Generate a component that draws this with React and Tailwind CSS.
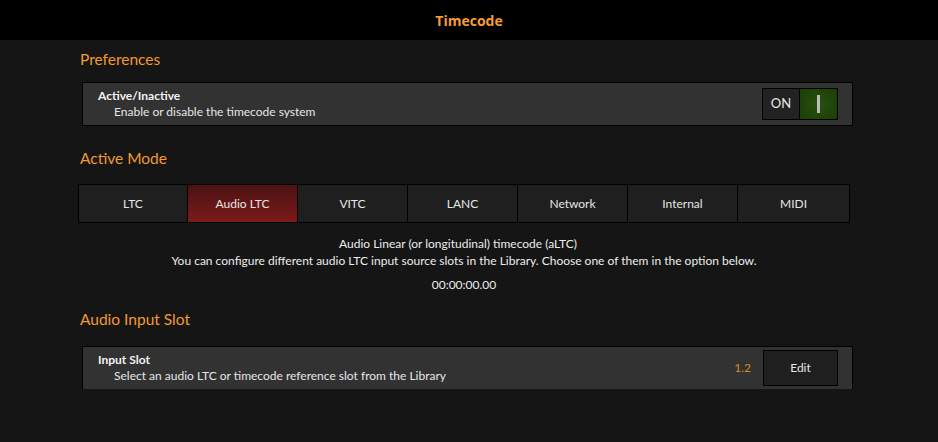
import { useState } from 'react';

const modes = ['LTC', 'Audio LTC', 'VITC', 'LANC', 'Network', 'Internal', 'MIDI'];

function Section({ title, children }) {
  return (
    <div>
      <h2 className="text-[15.5px] leading-[20px] text-[#f29a2e] pl-[2px]">{title}</h2>
      {children}
    </div>
  );
}

function SettingRow({ title, desc, children }) {
  return (
    <div className="ml-[4px] w-[771px] flex items-center justify-between bg-[#323232] border border-black h-[44px] pl-[15px] pr-[15px]">
      <div className="flex flex-col">
        <span className="text-[12px] leading-[16px] font-bold text-[#f2f2f2]">{title}</span>
        <span className="text-[12px] leading-[16px] text-[#e6e6e6] pl-[16px]">{desc}</span>
      </div>
      {children}
    </div>
  );
}

export default function App() {
  const [active, setActive] = useState(true);
  const [mode, setMode] = useState('Audio LTC');

  return (
    <div className="w-[938px] h-[442px] bg-[#151515] overflow-hidden" style={{ fontFamily: 'Lato, "Open Sans", sans-serif' }}>
      <div className="h-[40px] bg-black flex items-center justify-center">
        <span className="text-[14px] font-bold text-[#f59e33]" style={{ fontFamily: '"Open Sans", sans-serif' }}>Timecode</span>
      </div>

      <div className="w-[772px] ml-[78px] pt-[9px]">
        <Section title="Preferences">
          <div className="mt-[13px]">
            <SettingRow title="Active/Inactive" desc="Enable or disable the timecode system">
              <div className="flex border border-black h-[32px] w-[76px] -mr-[1px]">
                <button
                  onClick={() => setActive(false)}
                  className="w-[37px] bg-[#222] text-[13px] text-[#e8e8e8] flex items-center justify-center border-r border-black"
                >
                  ON
                </button>
                <button
                  onClick={() => setActive(!active)}
                  className="flex-1 flex items-center justify-center bg-[radial-gradient(circle,#28500f_0%,#1c3d08_100%)]"
                >
                  <span className="w-[3px] h-[18px] bg-[#b8bdb5]"></span>
                </button>
              </div>
            </SettingRow>
          </div>
        </Section>

        <div className="mt-[22px]">
          <Section title="Active Mode">
            <div className="mt-[16px] grid grid-cols-[108px_110px_110px_110px_110px_110px_1fr] border border-black h-[39px]">
              {modes.map((m, i) => (
                <button
                  key={m}
                  onClick={() => setMode(m)}
                  className={`text-[12px] text-[#e6e6e6] flex items-center justify-center ${i > 0 ? 'border-l border-black' : ''} ${
                    mode === m ? 'bg-gradient-to-b from-[#4c1212] to-[#7c1a1a]' : 'bg-[#1f1f1f]'
                  }`}
                >
                  {m}
                </button>
              ))}
            </div>
          </Section>
        </div>

        <div className="mt-[12px] flex flex-col items-center text-[12px] leading-[17px] text-[#ececec]">
          <span className="-ml-[12px]">Audio Linear (or longitudinal) timecode (aLTC)</span>
          <span>You can configure different audio LTC input source slots in the Library. Choose one of them in the option below.</span>
          <span className="mt-[7px]">00:00:00.00</span>
        </div>

        <div className="mt-[16px]">
          <Section title="Audio Input Slot">
            <div className="mt-[17px]">
              <div className="ml-[4px] w-[771px] flex items-center justify-between bg-[#323232] border border-black border-b-0 h-[43px] pl-[15px] pr-[15px]">
                <div className="flex flex-col">
                  <span className="text-[12px] leading-[16px] font-bold text-[#f2f2f2]">Input Slot</span>
                  <span className="text-[12px] leading-[16px] text-[#e6e6e6] pl-[16px]">Select an audio LTC or timecode reference slot from the Library</span>
                </div>
                <div className="flex items-center gap-[12px] -mr-[1px]">
                  <span className="text-[12px] text-[#d48d22]">1.2</span>
                  <button className="w-[75px] h-[36px] bg-[#1f1f1f] border border-black text-[12px] text-[#e6e6e6]">Edit</button>
                </div>
              </div>
            </div>
          </Section>
        </div>
      </div>
    </div>
  );
}
